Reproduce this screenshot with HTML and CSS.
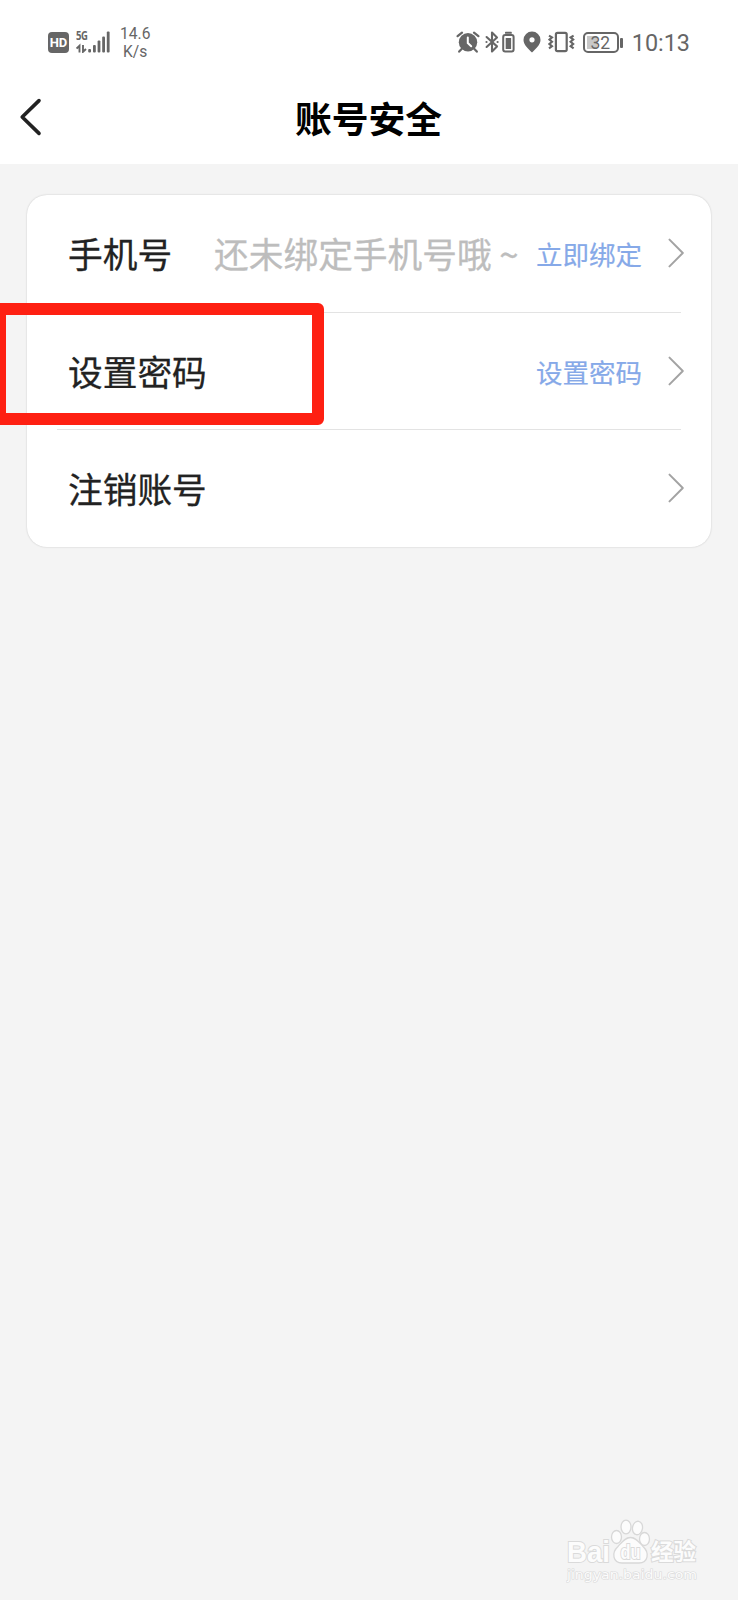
FILE: index.html
```
<!DOCTYPE html>
<html lang="zh-CN">
<head>
  <meta charset="UTF-8" />
  <meta name="viewport" content="width=device-width, initial-scale=1.0"/>
  <title>账号安全</title>
  <link rel="stylesheet" href="styles.css">
</head>
<body>

  <div class="status-bar">
    <div class="status-left">
      <span class="hd">HD</span>
      <div class="network">
        <span class="net-type">5G</span>
        <svg class="signal" width="34" height="22" viewBox="0 0 34 22">
          <g fill="#666">
            <rect x="12.2" y="18" width="2.8" height="3.4" rx="1"/>
            <rect x="17" y="14" width="2.8" height="7.4" rx="1"/>
            <rect x="21.6" y="9.6" width="2.8" height="11.8" rx="1"/>
            <rect x="26.2" y="5.4" width="2.8" height="16" rx="1"/>
            <rect x="30.8" y="0.6" width="2.8" height="20.8" rx="1"/>
          </g>
          <path d="M3.5 21.4V14.8L0.6 17.6M7 14V20.8L10 18" fill="none" stroke="#666" stroke-width="1.9"/>
        </svg>
      </div>
      <div class="speed"><span>14.6</span><span>K/s</span></div>
    </div>

    <div class="status-right">
      <svg class="alarm" width="24" height="22" viewBox="0 0 24 22">
        <circle cx="12" cy="11.2" r="9.2" fill="#666"/>
        <path d="M1.6 5.2L6 1.6M22.4 5.2L18 1.6M5.6 18L3.2 20.6M18.4 18L20.8 20.6" stroke="#666" stroke-width="2.2" stroke-linecap="round"/>
        <path d="M11.8 6.6V12L15.2 15.2" fill="none" stroke="#fff" stroke-width="2" stroke-linecap="round"/>
      </svg>
      <svg class="bluetooth" width="30" height="22" viewBox="0 0 30 22">
        <path d="M1.6 6L12 15.4L7 20.4V1.6L12 6.4L1.6 16" fill="none" stroke="#666" stroke-width="2.1" stroke-linejoin="round" stroke-linecap="round"/>
        <circle cx="1.5" cy="11" r="1.1" fill="#666"/>
        <circle cx="12.6" cy="11" r="1.1" fill="#666"/>
        <rect x="18.2" y="4" width="10.4" height="16.6" rx="2" fill="none" stroke="#666" stroke-width="2"/>
        <rect x="20.7" y="7" width="5.4" height="11" fill="#666"/>
        <rect x="20" y="0.8" width="6.8" height="2" rx="0.6" fill="#666"/>
      </svg>
      <svg class="pin" width="18" height="22" viewBox="0 0 18 22">
        <path fill="#666" fill-rule="evenodd" d="M9 0.6A8.5 8.5 0 0 1 17.5 9C17.5 14 12.5 18 9 21.6C5.5 18 0.5 14 0.5 9A8.5 8.5 0 0 1 9 0.6ZM9 6.2A2.6 2.6 0 1 0 9 11.4A2.6 2.6 0 1 0 9 6.2Z"/>
      </svg>
      <svg class="vibrate" width="27" height="22" viewBox="0 0 27 22">
        <rect x="7.9" y="1.8" width="10.8" height="18.4" rx="1.6" fill="none" stroke="#666" stroke-width="2.2"/>
        <path d="M1 4.6L4 6.4L1.4 8.6L4 10.8L1.4 13L4 15.2L1 17.4M25.6 4.6L22.6 6.4L25.2 8.6L22.6 10.8L25.2 13L22.6 15.2L25.6 17.4" fill="none" stroke="#666" stroke-width="2.1"/>
      </svg>
      <div class="battery"><span>32</span></div>
      <span class="clock">10:13</span>
    </div>
  </div>

  <div class="nav">
    <svg class="back" width="24" height="40" viewBox="0 0 24 40">
      <path d="M20 3.6L3.2 20L20 36.4" fill="none" stroke="#222" stroke-width="3.6" stroke-linecap="round" stroke-linejoin="round"/>
    </svg>
    <h1>账号安全</h1>
  </div>

  <div class="card">
    <div class="row">
      <span class="label">手机号</span>
      <span class="hint">还未绑定手机号哦 ~</span>
      <span class="action">立即绑定</span>
      <svg class="arrow" width="18" height="32" viewBox="0 0 18 32">
        <path d="M2.5 2.6L15.8 16L2.5 29.4" fill="none" stroke="#a3a3a3" stroke-width="2" stroke-linecap="round" stroke-linejoin="round"/>
      </svg>
    </div>
    <div class="row">
      <span class="label">设置密码</span>
      <span class="action">设置密码</span>
      <svg class="arrow" width="18" height="32" viewBox="0 0 18 32">
        <path d="M2.5 2.6L15.8 16L2.5 29.4" fill="none" stroke="#a3a3a3" stroke-width="2" stroke-linecap="round" stroke-linejoin="round"/>
      </svg>
      <div class="highlight"></div>
    </div>
    <div class="row">
      <span class="label">注销账号</span>
      <svg class="arrow" width="18" height="32" viewBox="0 0 18 32">
        <path d="M2.5 2.6L15.8 16L2.5 29.4" fill="none" stroke="#a3a3a3" stroke-width="2" stroke-linecap="round" stroke-linejoin="round"/>
      </svg>
    </div>
  </div>

  <div class="watermark">
    <svg width="136" height="66" viewBox="0 0 136 66">
      <g fill="#fcfcfc" stroke="#d8d8d8" stroke-width="1.3">
        <ellipse cx="50.5" cy="18" rx="5" ry="6.5"/>
        <ellipse cx="60" cy="8" rx="5" ry="6.8"/>
        <ellipse cx="71.5" cy="9" rx="5" ry="6.8" transform="rotate(10 71.5 9)"/>
        <ellipse cx="78.5" cy="20" rx="5" ry="6.5"/>
        <path d="M64.5 18.5C70 18.5 73 23 77 27.5C84 34 82 44 73 44H56C47 44 45 34 52 27.5C56 23 59 18.5 64.5 18.5Z"/>
      </g>
      <g class="wm-text">
        <text class="wm-bai" x="1" y="43" textLength="43" lengthAdjust="spacingAndGlyphs">Bai</text>
        <text class="wm-du" x="54.5" y="40" textLength="20" lengthAdjust="spacingAndGlyphs">du</text>
        <text class="wm-cn" x="85" y="41">经验</text>
        <text class="wm-url" x="1" y="60" textLength="130" lengthAdjust="spacingAndGlyphs">jingyan.baidu.com</text>
      </g>
    </svg>
  </div>

</body>
</html>
```
FILE: styles.css
```
* {
  box-sizing: border-box;
}
body {
  margin: 0;
  min-height: 1600px;
  background-color: #f4f4f4;
  color: #222;
  font-family: "Noto Sans CJK SC", sans-serif;
  display: flex;
  flex-direction: column;
  overflow: hidden;
}
svg {
  display: block;
  flex: none;
}

/* status bar */
.status-bar {
  height: 84px;
  padding: 0 48px 0 48px;
  background: #fff;
  color: #666;
  font-family: Roboto, sans-serif;
  display: flex;
  justify-content: space-between;
  align-items: center;
}
.status-left, .status-right {
  display: flex;
  align-items: center;
}
.hd {
  width: 21px;
  height: 21px;
  border-radius: 4px;
  background: #666;
  color: #fff;
  font-size: 13px;
  font-weight: bold;
  line-height: 21px;
  text-align: center;
}
.network {
  display: grid;
  margin-left: 7px;
}
.network > * {
  grid-area: 1 / 1;
}
.net-type {
  font-family: "Open Sans", sans-serif;
  font-size: 12.5px;
  font-weight: bold;
  line-height: 10px;
  letter-spacing: -0.5px;
  transform: scaleX(0.76);
  transform-origin: left;
  height: 11px;
}
.speed {
  display: flex;
  flex-direction: column;
  align-items: center;
  margin-left: 10px;
  padding-top: 2px;
  font-size: 15.6px;
  line-height: 18.5px;
}
.alarm {
  margin-right: 1px;
}
.pin {
  margin-left: 8px;
}
.bluetooth {
  margin-left: 4px;
}
.vibrate {
  margin-left: 7px;
}
.battery {
  position: relative;
  width: 36px;
  height: 21px;
  margin-left: 8px;
  border: 2px solid #666;
  border-radius: 5px;
  background: linear-gradient(#c8c8c8, #c8c8c8) 2px 2px / 10px 13px no-repeat;
  font-size: 17.5px;
  line-height: 18px;
  text-align: center;
  padding-right: 1px;
}
.battery::after {
  content: "";
  position: absolute;
  right: -6px;
  top: 4px;
  width: 2.5px;
  height: 10px;
  border-radius: 1px;
  background: #666;
}
.clock {
  margin-left: 13px;
  font-size: 23.4px;
  line-height: 28px;
  padding-top: 2px;
}

/* title */
.nav {
  height: 80px;
  padding: 0 18px 0 19px;
  background: #fff;
  display: grid;
  grid-template-columns: 24px 1fr 26px;
  align-items: center;
}
.back {
  margin-bottom: 14px;
}
.nav h1 {
  margin: 0 0 15px;
  color: #000;
  font-size: 36.8px;
  line-height: 54px;
  font-weight: bold;
  text-align: center;
}

/* settings list */
.card {
  margin: 31px 27px 0;
  background: #fff;
  border-radius: 20px;
  box-shadow: 0 0 2px rgba(0,0,0,0.2);
}
.row {
  position: relative;
  height: 117.5px;
  margin: 0 30px;
  padding: 0 0 0 11px;
  border-bottom: 1px solid #e3e3e3;
  display: flex;
  align-items: center;
}
.row:last-child {
  height: 116.5px;
  border-bottom: none;
}
.label {
  font-size: 34.7px;
  line-height: 50px;
  -webkit-text-stroke: 0.3px;
}
.hint {
  margin-left: 42px;
  color: #bdbdbd;
  font-size: 34.7px;
  line-height: 50px;
  white-space: nowrap;
  -webkit-text-stroke: 0.3px;
}
.action {
  margin-left: auto;
  margin-right: 25px;
  padding-top: 2px;
  color: #86a9e8;
  font-size: 26.5px;
  line-height: 40px;
  -webkit-text-stroke: 0.2px;
}
.arrow {
  margin-right: -4px;
}
.label + .arrow {
  margin-left: auto;
}
.highlight {
  position: absolute;
  left: -63px;
  top: -10px;
  width: 330px;
  height: 122px;
  border: 12px solid #fe2012;
  border-radius: 6px;
}

.watermark {
  margin: auto 36px 15px auto;
}
.wm-text {
  fill: #fcfcfc;
  stroke: #dadada;
  stroke-width: 2px;
  paint-order: stroke;
  font-family: "Noto Sans CJK SC", sans-serif;
}
.wm-bai {
  font-family: "Liberation Sans", sans-serif;
  font-size: 30px;
  font-weight: bold;
}
.wm-du {
  font-family: "Liberation Sans", sans-serif;
  font-size: 20px;
  font-weight: bold;
}
.wm-cn {
  font-size: 22.5px;
  font-weight: bold;
}
.wm-url {
  font-family: "DejaVu Sans", sans-serif;
  font-size: 13px;
  stroke-width: 1.2px;
}
```
